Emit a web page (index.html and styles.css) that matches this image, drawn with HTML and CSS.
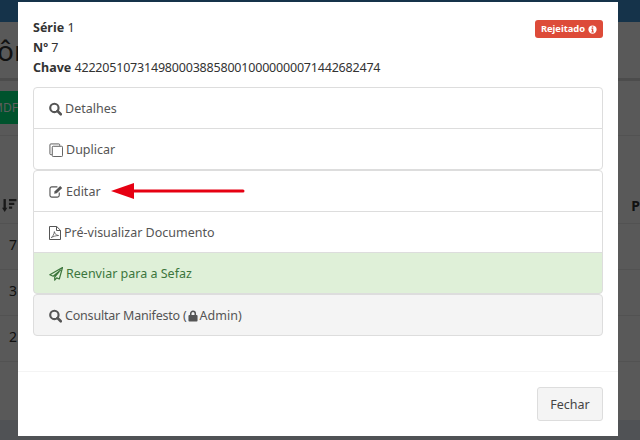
FILE: index.html
```html
<!DOCTYPE html>
<html lang="pt-BR">
<head>
    <meta charset="UTF-8">
    <title>Manifesto</title>
    <link rel="stylesheet" href="styles.css">
</head>
<body>

    <svg width="0" height="0" class="sprites">
        <symbol id="i-search" viewBox="0 0 14 14">
            <circle cx="5.800" cy="5.800" r="4.500" fill="none" stroke="currentColor" stroke-width="2.300"/>
            <path d="M9.200 9.200l3.500 3.500" fill="none" stroke="currentColor" stroke-width="2.800" stroke-linecap="round"/>
        </symbol>
        <symbol id="i-copy" viewBox="0 0 15 15">
            <path d="M3 12.500H2a1 1 0 0 1-1-1V2a1 1 0 0 1 1-1h8.500a1 1 0 0 1 1 1v1" fill="none" stroke="currentColor" stroke-width="1"/>
            <rect x="3.500" y="3.500" width="11" height="11" rx="1" fill="none" stroke="currentColor" stroke-width="1"/>
        </symbol>
        <symbol id="i-edit" viewBox="0 0 15 14">
            <path d="M11 8v3a2 2 0 0 1-2 2H3a2 2 0 0 1-2-2V4a2 2 0 0 1 2-2h6" fill="none" stroke="currentColor" stroke-width="1.200"/>
            <path d="M5.500 9.500l.6-2.800L12 1l2.200 2.200-5.900 5.700z" fill="currentColor"/>
        </symbol>
        <symbol id="i-pdf" viewBox="0 0 12 14">
            <path d="M.5.5h7.200l3.800 3.800v9.200H.5zM7.500.5v4h4" fill="none" stroke="currentColor" stroke-width="1"/>
            <path d="M2.200 11.600c1.600-.8 2.800-3.600 3.200-6 .3 2.200 1.600 3.700 4.200 3.900-2.500 0-5.300 1-7.400 2.100z" fill="none" stroke="currentColor" stroke-width=".8"/>
        </symbol>
        <symbol id="i-plane" viewBox="0 0 14 14">
            <path d="M13.500.5L.8 7.800l3.400 1.400 7.200-6-5.700 6.800v3.200l2-2.300 2.600 1.100z" fill="none" stroke="currentColor" stroke-width="1.200" stroke-linejoin="round"/>
        </symbol>
        <symbol id="i-lock" viewBox="0 0 11 13">
            <path d="M3 6V3.800a2.500 2.500 0 0 1 5 0V6" fill="none" stroke="currentColor" stroke-width="1.700"/>
            <rect x=".5" y="5.500" width="10" height="7" rx="1" fill="currentColor"/>
        </symbol>
        <symbol id="i-info" viewBox="0 0 12 12">
            <path fill-rule="evenodd" fill="currentColor" d="M6 .5a5.500 5.500 0 1 0 0 11 5.500 5.500 0 0 0 0-11zM5 2h2v1.700H5zM4.500 4.700H7v3.800h.8V10H4.500V8.500h.8V6.200h-.8z"/>
        </symbol>
    </svg>

    <div class="topbar"></div>
    <div class="page">
        <h1 class="title">ôn</h1>
        <div class="title-rule"></div>
        <div class="toolbar"><span class="btn-green">MDF</span></div>
        <div class="toolbar-rule"></div>
        <div class="thead">
            <svg class="sort" viewBox="0 0 14 14" width="15" height="15"><path d="M2.500 1v9" fill="none" stroke="currentColor" stroke-width="2.200"/><path d="M0 9h5l-2.500 4z" fill="currentColor"/><path d="M6.500 1h7v2h-7zM6.500 4.500h5v2h-5zM6.500 8h3v2h-3z" fill="currentColor"/></svg>
            <b class="thead-p">P</b>
        </div>
        <div class="row">7</div>
        <div class="row">3</div>
        <div class="row">2</div>
        <div class="page-footer"></div>
    </div>

    <div class="backdrop"></div>

    <div class="modal">
        <div class="modal-body">
            <span class="badge">Rejeitado <svg class="ic-badge"><use href="#i-info"/></svg></span>
            <div class="info"><b>Série</b> 1</div>
            <div class="info"><b>Nº</b> 7</div>
            <div class="info"><b>Chave</b> <span class="chave">42220510731498000388580010000000071442682474</span></div>

            <div class="list first">
                <div class="item"><svg class="ic ic-search"><use href="#i-search"/></svg><span>Detalhes</span></div>
                <div class="item"><svg class="ic ic-copy"><use href="#i-copy"/></svg><span>Duplicar</span></div>
            </div>
            <div class="list">
                <div class="item item-arrow">
                    <svg class="ic ic-edit"><use href="#i-edit"/></svg><span>Editar</span>
                    <svg class="arrow" viewBox="0 0 134 18" width="134" height="18"><path d="M23 9H132" stroke="#e60012" stroke-width="3" stroke-linecap="round"/><path d="M0 9L23 1v16z" fill="#e60012"/></svg>
                </div>
                <div class="item"><svg class="ic ic-pdf"><use href="#i-pdf"/></svg><span>Pré-visualizar Documento</span></div>
                <div class="item item-success"><svg class="ic ic-plane"><use href="#i-plane"/></svg><span>Reenviar para a Sefaz</span></div>
            </div>
            <div class="list">
                <div class="item item-muted"><svg class="ic ic-search"><use href="#i-search"/></svg><span class="tight">Consultar Manifesto (</span><svg class="ic ic-lock"><use href="#i-lock"/></svg><span>Admin)</span></div>
            </div>
        </div>
        <div class="modal-footer">
            <button class="btn">Fechar</button>
        </div>
    </div>

</body>
</html>
```

FILE: styles.css
```css
html, body {
    height: 100%;
}
body {
    margin: 0;
    overflow: hidden;
    background: #b2b2b2;
    color: #222;
    font-family: "Noto Sans", sans-serif;
    font-size: 12.5px;
    line-height: 20px;
}
.sprites {
    position: absolute;
}
.topbar {
    height: 22px;
    background: #2a6694;
}
.title {
    height: 56px;
    margin: 0;
    font-size: 28px;
    font-weight: 400;
    line-height: 56px;
    text-indent: -3px;
}
.title-rule {
    height: 3px;
    background: #999;
}
.toolbar {
    height: 54px;
    padding-top: 10px;
    box-sizing: border-box;
}
.btn-green {
    display: block;
    width: 18px;
    height: 33px;
    background: #00a65a;
    color: #bbb;
    font-size: 12px;
    line-height: 33px;
    text-indent: -8px;
    white-space: nowrap;
}
.toolbar-rule {
    height: 1px;
    background: #a4a4a4;
}
.thead {
    display: flex;
    justify-content: space-between;
    align-items: center;
    height: 88px;
    padding: 52px 0 0 2px;
    box-sizing: border-box;
    border-bottom: 1px solid #a4a4a4;
}
.sort {
    color: #333;
}
.thead-p {
    font-size: 14px;
}
.row {
    height: 46px;
    padding-left: 9px;
    box-sizing: border-box;
    border-bottom: 1px solid #a4a4a4;
    font-size: 14px;
    line-height: 42px;
}
.page-footer {
    height: 20px;
    margin-top: 58px;
    background: #a0a4ab;
}
.backdrop {
    position: fixed;
    top: 0;
    left: 0;
    right: 0;
    bottom: 0;
    background: rgba(0, 0, 0, 0.5);
}
.modal {
    position: fixed;
    top: 2px;
    left: 18px;
    width: 600px;
    background: #fff;
}
.modal-body {
    padding: 16px 15px 15px;
}
.info {
    color: #333;
}
.chave {
    letter-spacing: -0.2px;
}
.badge {
    float: right;
    display: flex;
    align-items: center;
    gap: 3px;
    height: 18px;
    margin-top: 2px;
    padding: 0 6px;
    border-radius: 3px;
    background: #dd4b39;
    color: #fff;
    font-size: 9.300px;
    font-weight: 700;
    line-height: 18px;
}
.ic-badge {
    width: 9px;
    height: 9px;
}
.list.first {
    margin-top: 9px;
}
.list:last-child {
    margin-bottom: 20px;
}
.item {
    display: flex;
    align-items: center;
    height: 42px;
    margin-bottom: -1px;
    padding: 2px 15px 0;
    box-sizing: border-box;
    border: 1px solid #ddd;
    background: #fff;
    color: #555;
    white-space: pre;
}
.item:first-child {
    border-radius: 4px 4px 0 0;
}
.item:last-child {
    margin-bottom: 0;
    border-radius: 0 0 4px 4px;
}
.item:only-child {
    border-radius: 4px;
}
.item-arrow {
    position: relative;
}
.item-success {
    background: #dff0d8;
    color: #3c763d;
}
.item-muted {
    background: #f4f4f4;
}
.tight {
    letter-spacing: -0.2px;
}
.ic {
    flex: none;
    margin-right: 3px;
}
.ic-search {
    width: 13px;
    height: 14px;
}
.ic-copy {
    width: 14px;
    height: 14px;
}
.ic-edit {
    width: 14px;
    height: 13px;
    margin-bottom: 2px;
}
.ic-pdf {
    width: 12px;
    height: 14px;
}
.ic-plane {
    width: 14px;
    height: 14px;
}
.ic-lock {
    width: 10px;
    height: 12px;
    margin: 0 2px 0 1px;
}
.arrow {
    position: absolute;
    top: 11px;
    left: 77px;
}
.modal-footer {
    display: flex;
    justify-content: flex-end;
    padding: 15px;
    border-top: 1px solid #f4f4f4;
}
.btn {
    width: 66px;
    height: 34px;
    padding: 0;
    border: 1px solid #ddd;
    border-radius: 3px;
    background: #f4f4f4;
    color: #444;
    font-family: inherit;
    font-size: 12.5px;
}
```
